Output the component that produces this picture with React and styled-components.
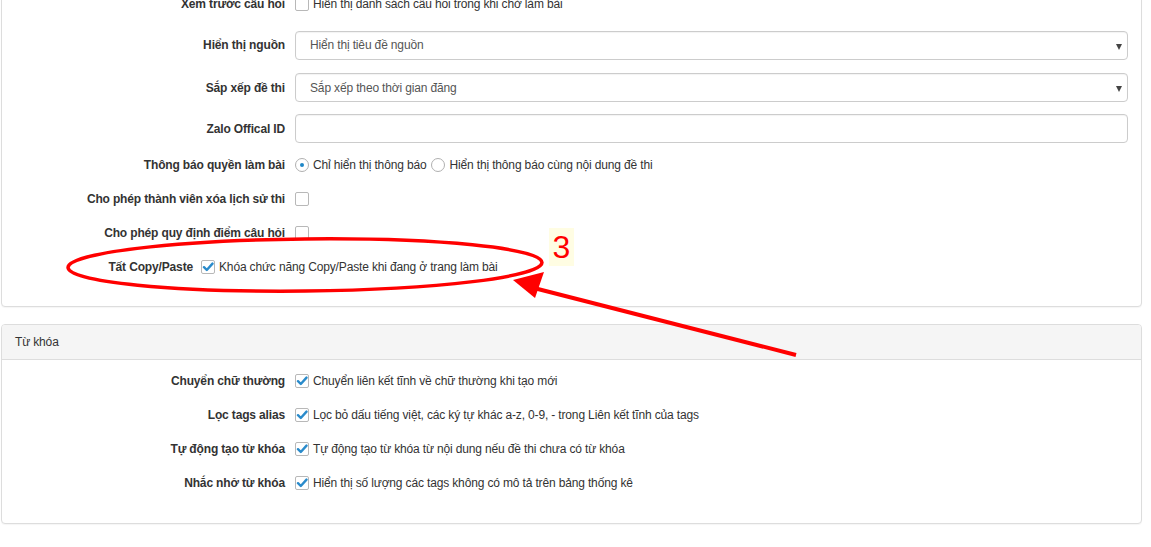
import React from 'react';
import styled, { createGlobalStyle } from 'styled-components';

const GlobalStyle = createGlobalStyle`
  html, body {
    margin: 0;
    padding: 0;
    background: #fff;
    overflow: hidden;
  }
  body {
    font-family: "Liberation Sans", Arial, sans-serif;
    font-size: 12px;
    letter-spacing: -0.15px;
    color: #333;
  }
`;

const Page = styled.div`
  position: relative;
  width: 1151px;
  height: 547px;
  overflow: hidden;
  padding-left: 1px;
  box-sizing: border-box;
`;

const Panel = styled.div`
  width: 1141px;
  box-sizing: border-box;
  border: 1px solid #ddd;
  border-radius: 4px;
  background: #fff;
  margin-top: ${p => p.$top || 0}px;
  margin-bottom: 17px;
  box-shadow: 0 1px 1px rgba(0, 0, 0, 0.04);
`;

const PanelHeading = styled.div`
  height: 34px;
  display: flex;
  align-items: center;
  padding-left: 13px;
  background: #f5f5f5;
  border-bottom: 1px solid #ddd;
  border-radius: 3px 3px 0 0;
  color: #333;
`;

const PanelBody = styled.div`
  padding: ${p => p.$pad};
  display: flex;
  flex-direction: column;
`;

const Row = styled.div`
  display: grid;
  grid-template-columns: ${p => p.$labelWidth || 293}px 1fr;
  align-items: center;
  height: ${p => p.$h || 34}px;
  padding-right: 13px;
`;

const Label = styled.label`
  text-align: right;
  padding-right: ${p => p.$pr || 10}px;
  font-weight: bold;
  color: #333;
  white-space: nowrap;
`;

const Control = styled.div`
  display: flex;
  align-items: center;
  gap: 4px;
  white-space: nowrap;
`;

const SelectBox = styled.div`
  position: relative;
  border: 1px solid #ccc;
  border-radius: 4px;
  box-sizing: border-box;
  height: 29px;
  display: flex;
  align-items: center;
  padding-left: 14px;
  color: #555;
  box-shadow: inset 0 1px 1px rgba(0, 0, 0, 0.05);
  &::after {
    content: "";
    position: absolute;
    right: 5px;
    top: 12px;
    border-left: 3.5px solid transparent;
    border-right: 3.5px solid transparent;
    border-top: 6px solid #444;
  }
`;

const TextInput = styled.div`
  height: 29px;
  box-sizing: border-box;
  border: 1px solid #ccc;
  border-radius: 4px;
  box-shadow: inset 0 1px 1px rgba(0, 0, 0, 0.05);
`;

const Box = styled.span`
  width: 14px;
  height: 14px;
  box-sizing: border-box;
  border: 1px solid #b8b8b8;
  border-radius: 2px;
  background: #fff;
  display: inline-flex;
  align-items: center;
  justify-content: center;
  flex-shrink: 0;
`;

const RadioCircle = styled.span`
  width: 14px;
  height: 14px;
  box-sizing: border-box;
  border: 1px solid #b0b0b0;
  border-radius: 50%;
  background: #fff;
  display: inline-flex;
  align-items: center;
  justify-content: center;
  flex-shrink: 0;
  &::after {
    content: "";
    width: 4px;
    height: 4px;
    border-radius: 50%;
    background: ${p => (p.$on ? '#1f87c7' : 'transparent')};
  }
`;

const OptText = styled.span`
  color: #333;
  margin-right: ${p => p.$mr || 0}px;
`;

const Overlay = styled.svg`
  position: absolute;
  left: 0;
  top: 0;
  pointer-events: none;
`;

const Badge = styled.span`
  position: absolute;
  left: 549px;
  top: 228px;
  width: 25px;
  height: 38px;
  background: #fffde3;
  color: #ff0000;
  font-family: "Liberation Sans", Arial, sans-serif;
  font-size: 32px;
  letter-spacing: 0;
  line-height: 38px;
  text-align: center;
`;

const Checkbox = ({ checked }) => (
  <Box>
    {checked && (
      <svg width="12" height="12" viewBox="0 0 12 12">
        <path d="M2 6.2 L4.8 9 L10.5 2.6" fill="none" stroke="#2a8bcb" strokeWidth="2.4" strokeLinecap="round" strokeLinejoin="round" />
      </svg>
    )}
  </Box>
);

const CheckRow = ({ label, text, checked, h, labelWidth, pr }) => (
  <Row $h={h} $labelWidth={labelWidth}>
    <Label $pr={pr}>{label}</Label>
    <Control>
      <Checkbox checked={checked} />
      {text && <OptText>{text}</OptText>}
    </Control>
  </Row>
);

const keywordRows = [
  ['Chuyển chữ thường', 'Chuyển liên kết tĩnh về chữ thường khi tạo mới'],
  ['Lọc tags alias', 'Lọc bỏ dấu tiếng việt, các ký tự khác a-z, 0-9, - trong Liên kết tĩnh của tags'],
  ['Tự động tạo từ khóa', 'Tự động tạo từ khóa từ nội dung nếu đề thi chưa có từ khóa'],
  ['Nhắc nhở từ khóa', 'Hiển thị số lượng các tags không có mô tả trên bảng thống kê'],
];

export default function App() {
  return (
    <>
      <GlobalStyle />
      <Page>
        <Panel $top={-33}>
          <PanelBody $pad="15px 0 22px 0">
            <CheckRow h={41} label="Xem trước câu hỏi" text="Hiển thị danh sách câu hỏi trong khi chờ làm bài" />
            <Row $h={42}>
              <Label>Hiển thị nguồn</Label>
              <SelectBox>Hiển thị tiêu đề nguồn</SelectBox>
            </Row>
            <Row $h={43}>
              <Label>Sắp xếp đề thi</Label>
              <SelectBox>Sắp xếp theo thời gian đăng</SelectBox>
            </Row>
            <Row $h={39}>
              <Label>Zalo Offical ID</Label>
              <TextInput />
            </Row>
            <Row $h={34}>
              <Label>Thông báo quyền làm bài</Label>
              <Control>
                <RadioCircle $on />
                <OptText $mr={1}>Chỉ hiển thị thông báo</OptText>
                <RadioCircle />
                <OptText>Hiển thị thông báo cùng nội dung đề thi</OptText>
              </Control>
            </Row>
            <CheckRow label="Cho phép thành viên xóa lịch sử thi" />
            <CheckRow label="Cho phép quy định điểm câu hỏi" />
            <CheckRow label="Tất Copy/Paste" labelWidth={199} pr={8} checked text="Khóa chức năng Copy/Paste khi đang ở trang làm bài" />
          </PanelBody>
        </Panel>

        <Panel>
          <PanelHeading>Từ khóa</PanelHeading>
          <PanelBody $pad="4px 0 23px 0">
            {keywordRows.map(([label, text]) => (
              <CheckRow key={label} label={label} text={text} checked />
            ))}
          </PanelBody>
        </Panel>

        <Overlay width="1151" height="547" viewBox="0 0 1151 547">
          <ellipse cx="305" cy="265" rx="237" ry="26" fill="none" stroke="#ff0000" strokeWidth="3.5" transform="rotate(-0.6 305 265)" />
          <line x1="796" y1="355" x2="530" y2="287" stroke="#ff0000" strokeWidth="4" />
          <polygon points="513,280 544,272 535,298" fill="#ff0000" />
        </Overlay>
        <Badge>3</Badge>
      </Page>
    </>
  );
}
